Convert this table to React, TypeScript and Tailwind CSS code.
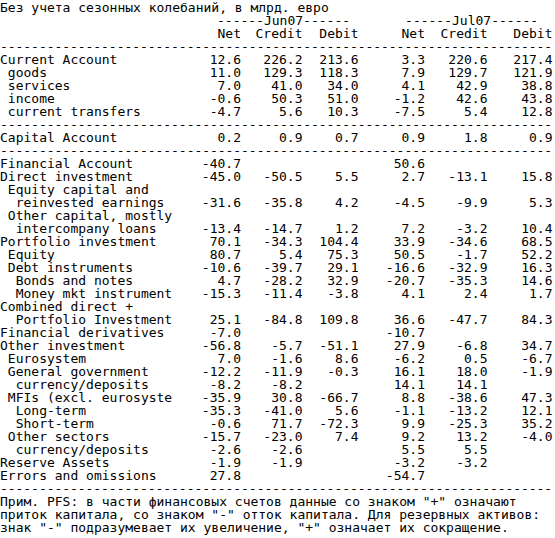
import React from 'react';

type Row = { l: string; v?: string[] } | 'sep';

const rows: Row[] = [
  { l: 'Current Account', v: ['12.6', '226.2', '213.6', '3.3', '220.6', '217.4'] },
  { l: ' goods', v: ['11.0', '129.3', '118.3', '7.9', '129.7', '121.9'] },
  { l: ' services', v: ['7.0', '41.0', '34.0', '4.1', '42.9', '38.8'] },
  { l: ' income', v: ['-0.6', '50.3', '51.0', '-1.2', '42.6', '43.8'] },
  { l: ' current transfers', v: ['-4.7', '5.6', '10.3', '-7.5', '5.4', '12.8'] },
  'sep',
  { l: 'Capital Account', v: ['0.2', '0.9', '0.7', '0.9', '1.8', '0.9'] },
  'sep',
  { l: 'Financial Account', v: ['-40.7', '', '', '50.6', '', ''] },
  { l: 'Direct investment', v: ['-45.0', '-50.5', '5.5', '2.7', '-13.1', '15.8'] },
  { l: ' Equity capital and' },
  { l: '  reinvested earnings', v: ['-31.6', '-35.8', '4.2', '-4.5', '-9.9', '5.3'] },
  { l: ' Other capital, mostly' },
  { l: '  intercompany loans', v: ['-13.4', '-14.7', '1.2', '7.2', '-3.2', '10.4'] },
  { l: 'Portfolio investment', v: ['70.1', '-34.3', '104.4', '33.9', '-34.6', '68.5'] },
  { l: ' Equity', v: ['80.7', '5.4', '75.3', '50.5', '-1.7', '52.2'] },
  { l: ' Debt instruments', v: ['-10.6', '-39.7', '29.1', '-16.6', '-32.9', '16.3'] },
  { l: '  Bonds and notes', v: ['4.7', '-28.2', '32.9', '-20.7', '-35.3', '14.6'] },
  { l: '  Money mkt instrument', v: ['-15.3', '-11.4', '-3.8', '4.1', '2.4', '1.7'] },
  { l: 'Combined direct +' },
  { l: '  Portfolio Investment', v: ['25.1', '-84.8', '109.8', '36.6', '-47.7', '84.3'] },
  { l: 'Financial derivatives', v: ['-7.0', '', '', '-10.7', '', ''] },
  { l: 'Other investment', v: ['-56.8', '-5.7', '-51.1', '27.9', '-6.8', '34.7'] },
  { l: ' Eurosystem', v: ['7.0', '-1.6', '8.6', '-6.2', '0.5', '-6.7'] },
  { l: ' General government', v: ['-12.2', '-11.9', '-0.3', '16.1', '18.0', '-1.9'] },
  { l: '  currency/deposits', v: ['-8.2', '-8.2', '', '14.1', '14.1', ''] },
  { l: ' MFIs (excl. eurosyste', v: ['-35.9', '30.8', '-66.7', '8.8', '-38.6', '47.3'] },
  { l: '  Long-term', v: ['-35.3', '-41.0', '5.6', '-1.1', '-13.2', '12.1'] },
  { l: '  Short-term', v: ['-0.6', '71.7', '-72.3', '9.9', '-25.3', '35.2'] },
  { l: ' Other sectors', v: ['-15.7', '-23.0', '7.4', '9.2', '13.2', '-4.0'] },
  { l: '  currency/deposits', v: ['-2.6', '-2.6', '', '5.5', '5.5', ''] },
  { l: 'Reserve Assets', v: ['-1.9', '-1.9', '', '-3.2', '-3.2', ''] },
  { l: 'Errors and omissions', v: ['27.8', '', '', '-54.7', '', ''] },
  'sep',
];

const grid = 'grid grid-cols-[201px_40px_61.5px_56px_66.5px_62.5px_65px] h-[13px]';

function Sep() {
  return <div className="h-[13px] tracking-[-0.05px]">{'-'.repeat(71)}</div>;
}

function DataRow({ l, v }: { l: string; v?: string[] }) {
  return (
    <div className={grid}>
      <div>{l}</div>
      {(v ?? ['', '', '', '', '', '']).map((x, i) => (
        <div key={i} className="text-right">
          {x}
        </div>
      ))}
    </div>
  );
}

export default function App() {
  return (
    <div className="w-[555px] h-[538px] overflow-hidden bg-white pt-[1px] text-black font-['DejaVu_Sans_Mono',monospace] text-[13px] leading-[13px] whitespace-pre">
      <div className="h-[13px]">Без учета сезонных колебаний, в млрд. евро</div>
      <div className="flex h-[13px] pl-[217px]">
        <span>------Jun07------</span>
        <span className="ml-[55px]">------Jul07------</span>
      </div>
      <DataRow l="" v={['Net', 'Credit', 'Debit', 'Net', 'Credit', 'Debit']} />
      <Sep />
      {rows.map((r, i) => (r === 'sep' ? <Sep key={i} /> : <DataRow key={i} l={r.l} v={r.v} />))}
      <div className="h-[13px]">Прим. PFS: в части финансовых счетов данные со знаком "+" означают</div>
      <div className="h-[13px]">приток капитала, со знаком "-" отток капитала. Для резервных активов:</div>
      <div className="h-[13px]">знак "-" подразумевает их увеличение, "+" означает их сокращение.</div>
    </div>
  );
}
